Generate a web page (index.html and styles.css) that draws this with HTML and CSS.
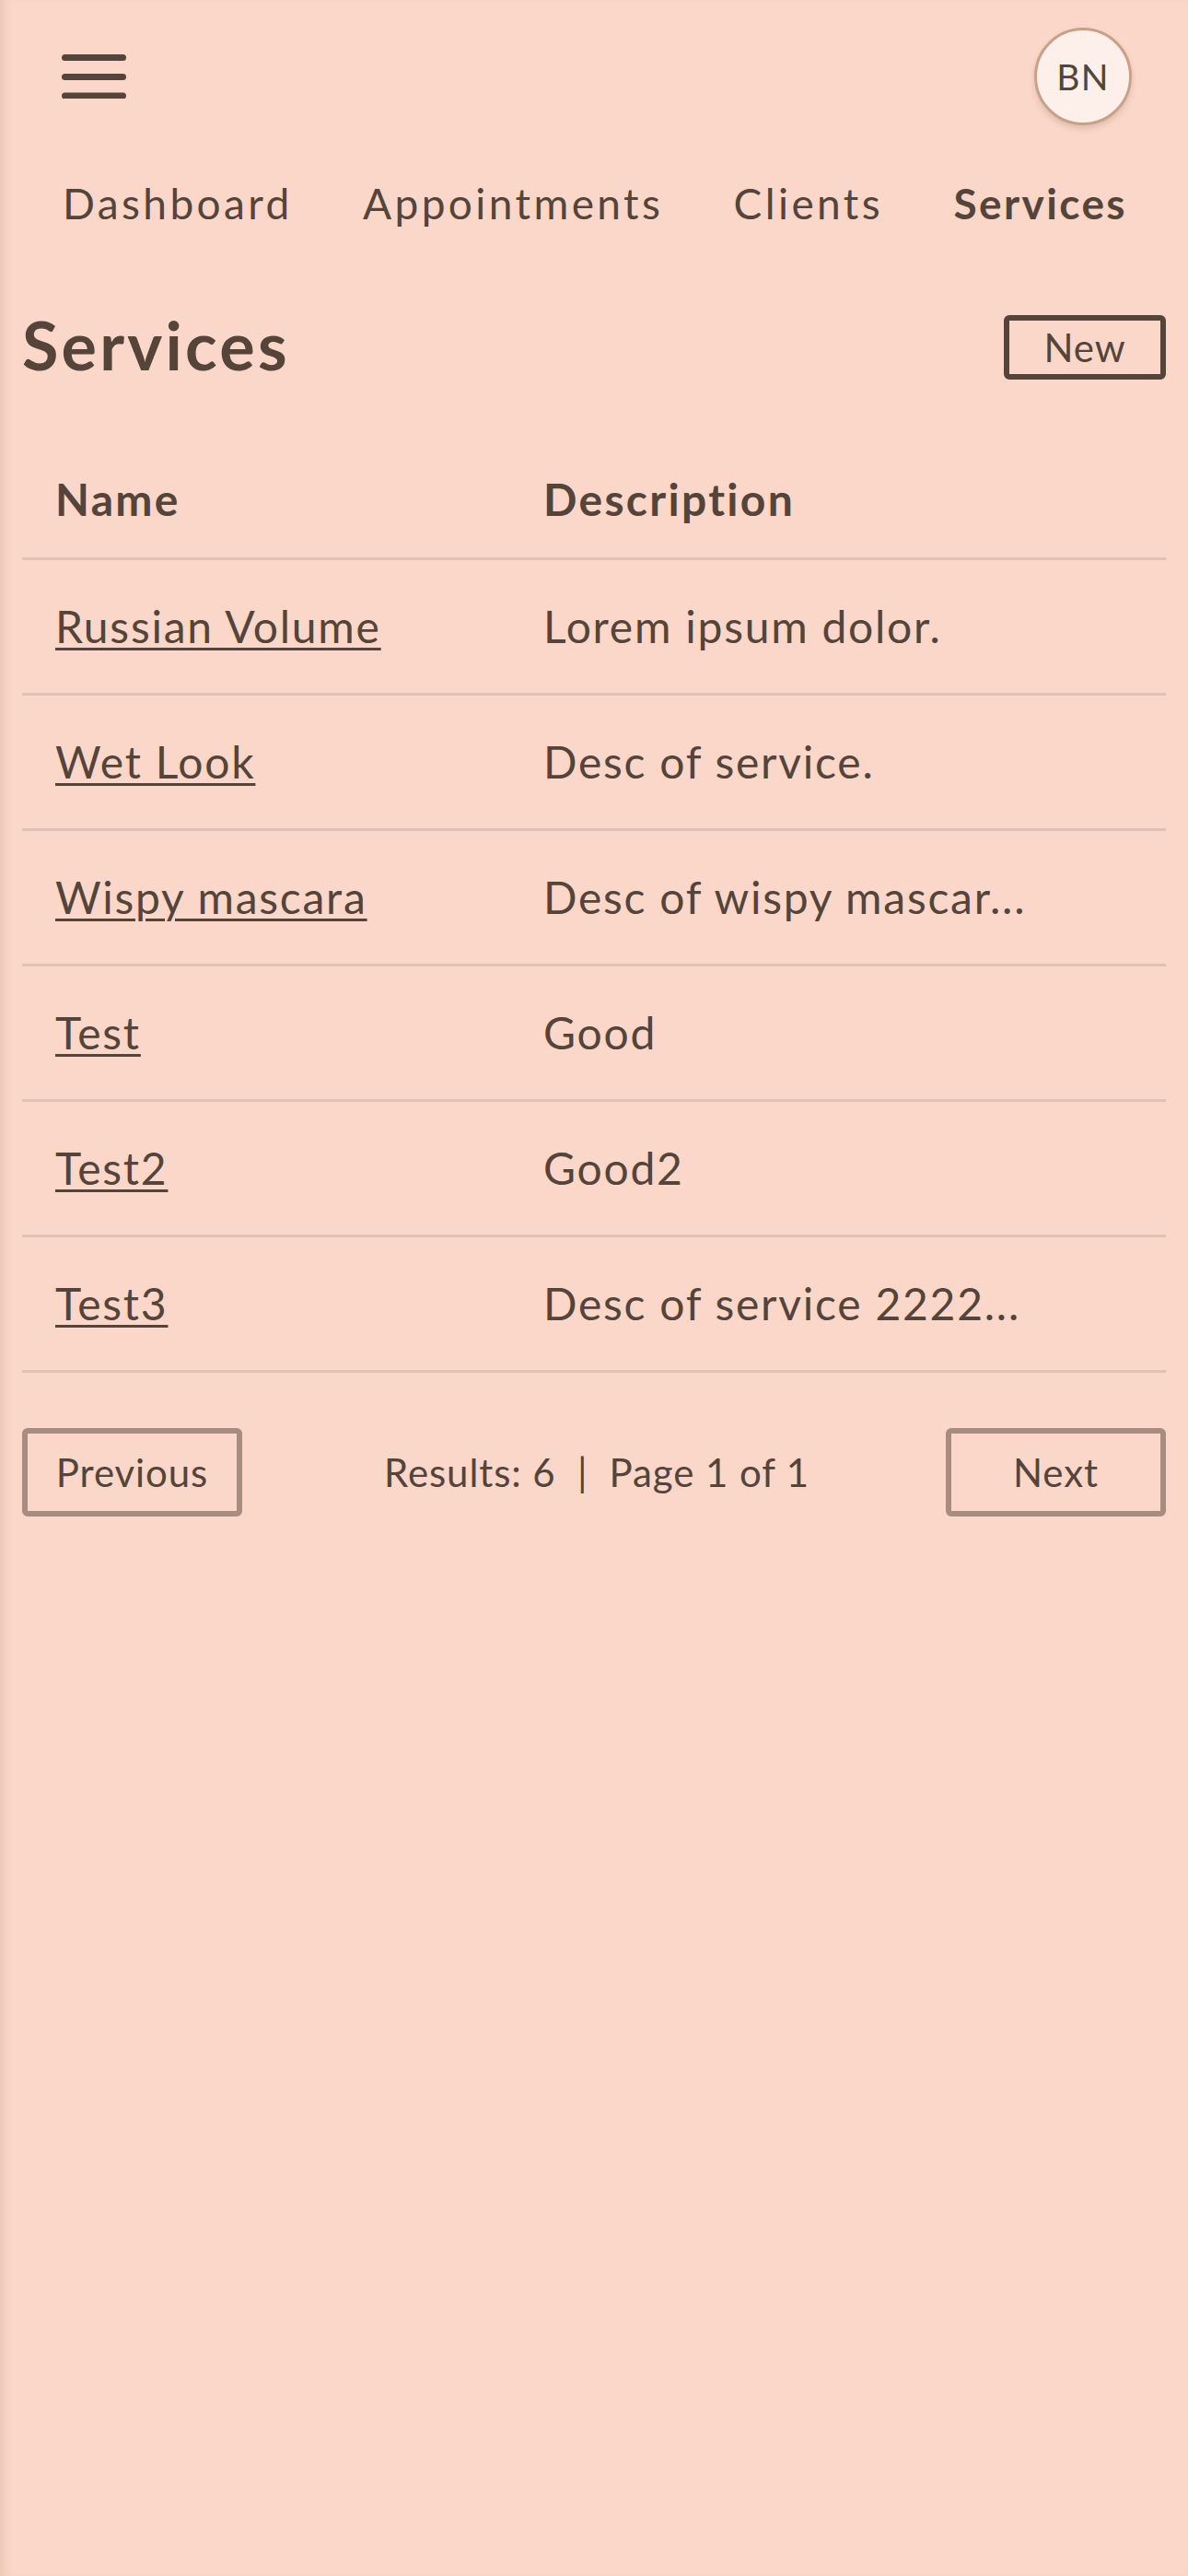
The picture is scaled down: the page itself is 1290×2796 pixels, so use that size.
FILE: index.html
```html
<!DOCTYPE html>
<html lang="en">
<head>
<meta charset="utf-8">
<title>Services</title>
<link rel="stylesheet" href="styles.css">
</head>
<body>
<div class="page">
  <header class="topbar">
    <button class="menu-btn" aria-label="Menu">
      <svg width="70" height="48" viewBox="0 0 70 48">
        <g stroke="#554439" stroke-width="7" stroke-linecap="round">
          <line x1="3.5" y1="3.5" x2="66.5" y2="3.5"/>
          <line x1="3.5" y1="24.5" x2="66.5" y2="24.5"/>
          <line x1="3.5" y1="45" x2="66.5" y2="45"/>
        </g>
      </svg>
    </button>
    <div class="avatar">BN</div>
  </header>

  <nav class="tabs">
    <a href="#" class="tab">Dashboard</a>
    <a href="#" class="tab">Appointments</a>
    <a href="#" class="tab">Clients</a>
    <a href="#" class="tab active">Services</a>
  </nav>

  <main class="content">
    <div class="title-row">
      <h1 class="title">Services</h1>
      <button class="btn-new">New</button>
    </div>

    <table class="services">
      <thead>
        <tr><th class="col-name">Name</th><th>Description</th></tr>
      </thead>
      <tbody>
        <tr><td><a href="#">Russian Volume</a></td><td>Lorem ipsum dolor.</td></tr>
        <tr><td><a href="#">Wet Look</a></td><td>Desc of service.</td></tr>
        <tr><td><a href="#">Wispy mascara</a></td><td>Desc of wispy mascar...</td></tr>
        <tr><td><a href="#">Test</a></td><td>Good</td></tr>
        <tr><td><a href="#">Test2</a></td><td>Good2</td></tr>
        <tr><td><a href="#">Test3</a></td><td>Desc of service 2222...</td></tr>
      </tbody>
    </table>

    <div class="pager">
      <button class="btn-page">Previous</button>
      <div class="pager-info">Results: 6 &nbsp;|&nbsp; Page 1 of 1</div>
      <button class="btn-page">Next</button>
    </div>
  </main>
</div>
</body>
</html>
```

FILE: styles.css
```css
* { box-sizing: border-box; }

html, body {
  margin: 0;
  padding: 0;
}

body {
  background: #fad7c9;
  color: #554439;
  font-family: Lato, "Liberation Sans", sans-serif;
  letter-spacing: 0.9px;
  min-height: 2796px;
  box-shadow: inset 10px 0 10px -6px rgba(170, 100, 70, 0.16);
}

.page {
  min-height: 2796px;
}

.topbar {
  display: flex;
  justify-content: space-between;
  align-items: center;
  padding: 30px 61px 0 67px;
}

.menu-btn {
  background: none;
  border: 0;
  padding: 0;
  width: 70px;
  height: 48px;
  display: block;
}

.menu-btn svg { display: block; }

.avatar {
  width: 106px;
  height: 106px;
  border-radius: 50%;
  background: #fdf0eb;
  border: 3px solid #c9a189;
  box-shadow: 0 4px 6px rgba(120, 70, 50, 0.18);
  display: flex;
  align-items: center;
  justify-content: center;
  font-size: 39px;
  letter-spacing: 1.2px;
  color: #554439;
}

.tabs {
  display: flex;
  justify-content: space-between;
  padding: 0 66px 0 68px;
  margin-top: 57px;
}

.tab {
  font-size: 46px;
  line-height: 56px;
  letter-spacing: 3.4px;
  color: #554439;
  text-decoration: none;
}

.tab.active { font-weight: 700; letter-spacing: 2.4px; }

.content {
  padding: 0 24px;
}

.title-row {
  display: flex;
  justify-content: space-between;
  align-items: flex-start;
  margin-top: 82px;
}

.title {
  margin: 0;
  font-size: 72px;
  line-height: 86px;
  font-weight: 700;
  letter-spacing: 3.2px;
}

.btn-new {
  margin-top: 11px;
  width: 176px;
  height: 70px;
  background: transparent;
  border: 6px solid #554439;
  border-radius: 6px;
  font-family: inherit;
  letter-spacing: inherit;
  font-size: 42px;
  color: #554439;
  padding: 0;
}

.services {
  width: 100%;
  border-collapse: separate;
  border-spacing: 0;
  margin-top: 62px;
}

.services th,
.services td {
  text-align: left;
  font-size: 48px;
  line-height: 58px;
  letter-spacing: 1.75px;
  border-bottom: 3px solid #e2c0b3;
  padding: 0 36px;
  vertical-align: middle;
}

.services th {
  font-weight: 700;
  letter-spacing: 2.3px;
  padding-top: 34px;
  padding-bottom: 34px;
}

.services td {
  height: 147px;
}

.services .col-name { width: 530px; }

.services a {
  color: #554439;
  text-decoration: underline;
  text-decoration-thickness: 3px;
  text-underline-offset: 5px;
}

.pager {
  display: flex;
  justify-content: space-between;
  align-items: center;
  margin-top: 60px;
}

.btn-page {
  width: 239px;
  height: 96px;
  background: transparent;
  border: 6px solid #a98c80;
  border-radius: 6px;
  font-family: inherit;
  letter-spacing: inherit;
  font-size: 42px;
  color: #554439;
  padding: 0;
}

.pager-info {
  font-size: 42px;
  color: #554439;
  padding-left: 6px;
}
```
